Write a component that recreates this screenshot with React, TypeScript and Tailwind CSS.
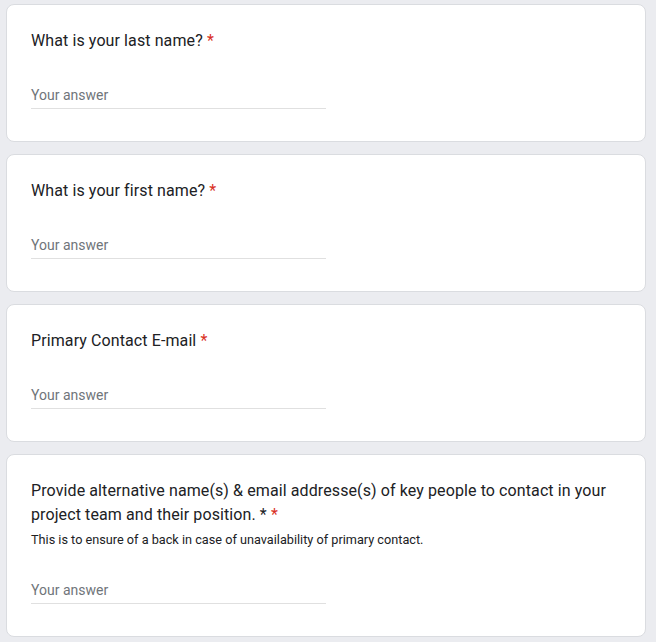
const questions = [
  { title: "What is your last name?" },
  { title: "What is your first name?" },
  { title: "Primary Contact E-mail" },
  {
    title:
      "Provide alternative name(s) & email addresse(s) of key people to contact in your project team and their position. *",
    help: "This is to ensure of a back in case of unavailability of primary contact.",
  },
];

function QuestionCard({ title, help }: { title: string; help?: string }) {
  return (
    <div className="bg-white border border-[#dadce0] rounded-[8px] pt-[24px] pb-[32px] px-[24px]">
      <div className="text-[16px] leading-[24px] text-[#202124] tracking-[0.1px] font-['Roboto',sans-serif]">
        {title} <span className="text-[#d93025]">*</span>
      </div>
      {help && (
        <div className="mt-[4px] text-[12.7px] leading-[18px] text-[#202124] font-['Roboto',sans-serif]">
          {help}
        </div>
      )}
      <div className={help ? "mt-[31px]" : "mt-[32px]"}>
        <div className="w-[295px] border-b border-[#e0e0e0] pb-[3px] text-[14px] leading-[20px] text-[#70757a] font-['Roboto',sans-serif]">
          Your answer
        </div>
      </div>
    </div>
  );
}

export default function App() {
  return (
    <div className="min-h-screen bg-[#ebecf0] pt-[4px] pl-[6px]">
      <div className="w-[640px] flex flex-col gap-[12px]">
        {questions.map((q) => (
          <QuestionCard key={q.title} title={q.title} help={q.help} />
        ))}
      </div>
    </div>
  );
}
